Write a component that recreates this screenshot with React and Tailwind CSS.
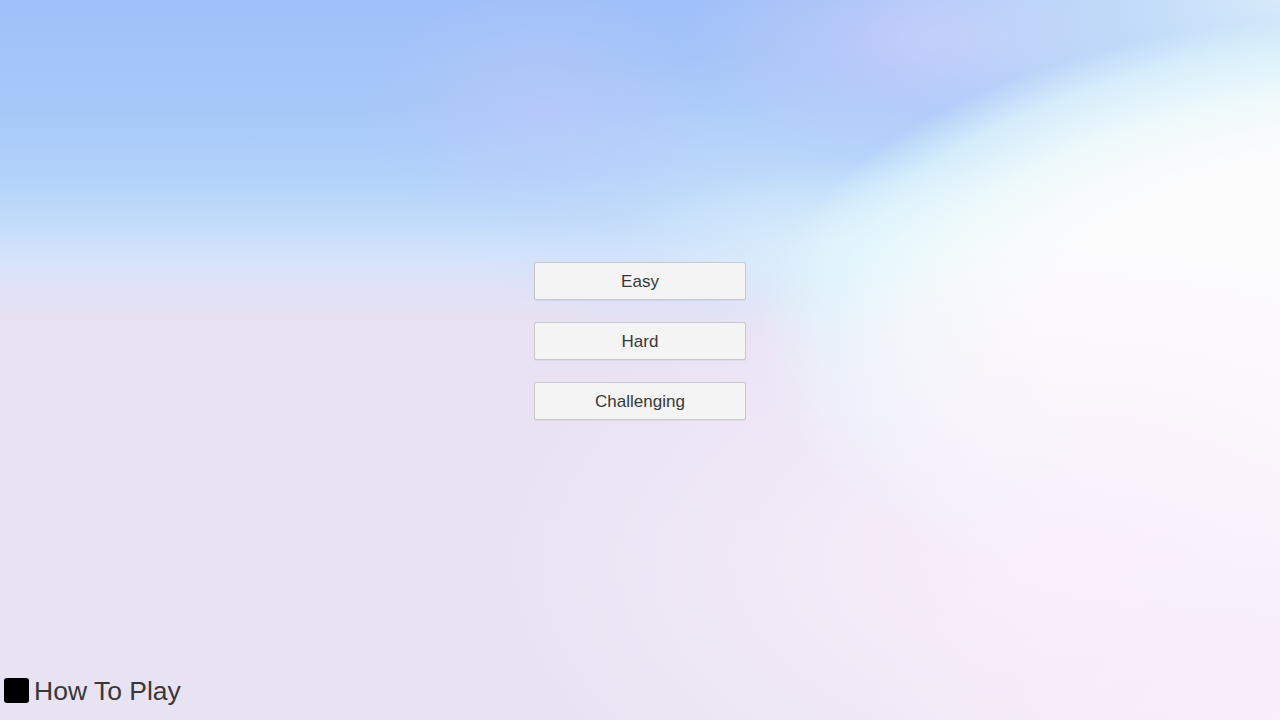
import React from "react"

const levels = ["Easy", "Hard", "Challenging"]

const LevelButton = ({ label }) => (
  <button className="w-[212px] h-[38px] pt-px bg-[#f4f4f4] border border-[#c9c9cc] rounded-[2px] text-[17px] text-[#383838] font-['Liberation_Sans',Arial,sans-serif] shadow-[0_1px_1px_rgba(0,0,0,0.06)]">
    {label}
  </button>
)

export default function App() {
  return (
    <div className="w-full h-screen overflow-hidden flex flex-col font-['Liberation_Sans',Arial,sans-serif] bg-[radial-gradient(ellipse_420px_260px_at_1280px_720px,rgba(251,238,252,0.95),rgba(251,238,252,0)_100%),radial-gradient(ellipse_560px_320px_at_1060px_560px,rgba(251,239,252,0.95),rgba(251,239,252,0.5)_55%,rgba(251,239,252,0)_100%),radial-gradient(ellipse_660px_320px_at_1420px_330px,#fcfcfd_0%,#fcfcfd_58%,rgba(242,251,252,0.95)_76%,rgba(226,248,252,0.7)_90%,rgba(220,240,252,0)_100%),radial-gradient(ellipse_420px_200px_at_1280px_0px,rgba(214,234,250,1),rgba(214,234,250,0)_100%),radial-gradient(ellipse_260px_90px_at_870px_250px,rgba(226,246,252,0.8),rgba(226,246,252,0)_100%),radial-gradient(ellipse_300px_150px_at_920px_40px,rgba(200,205,250,0.8),rgba(200,205,250,0)_80%),radial-gradient(ellipse_220px_160px_at_540px_110px,rgba(190,200,250,0.6),rgba(190,200,250,0)_80%),radial-gradient(ellipse_420px_180px_at_760px_200px,rgba(200,222,250,0.6),rgba(200,222,250,0)_80%),linear-gradient(to_bottom,#9ec0f8_0%,#a6c8f9_15%,#b0d2fa_24%,#c2dcfa_31%,#d6e4fb_36%,#e0e2f8_40%,#e8e2f3_45%,#e8e3f2_100%)]">
      <div className="flex flex-col items-center gap-[22px] pt-[262px]">
        {levels.map((l) => (
          <LevelButton key={l} label={l} />
        ))}
      </div>
      <div className="flex-1" />
      <div className="flex items-center gap-[5px] pl-[4px] pb-[16px]">
        <div className="w-[25px] h-[25px] bg-black rounded-[3px]" />
        <span className="text-[26.5px] leading-none text-[#383838]">How To Play</span>
      </div>
    </div>
  )
}
